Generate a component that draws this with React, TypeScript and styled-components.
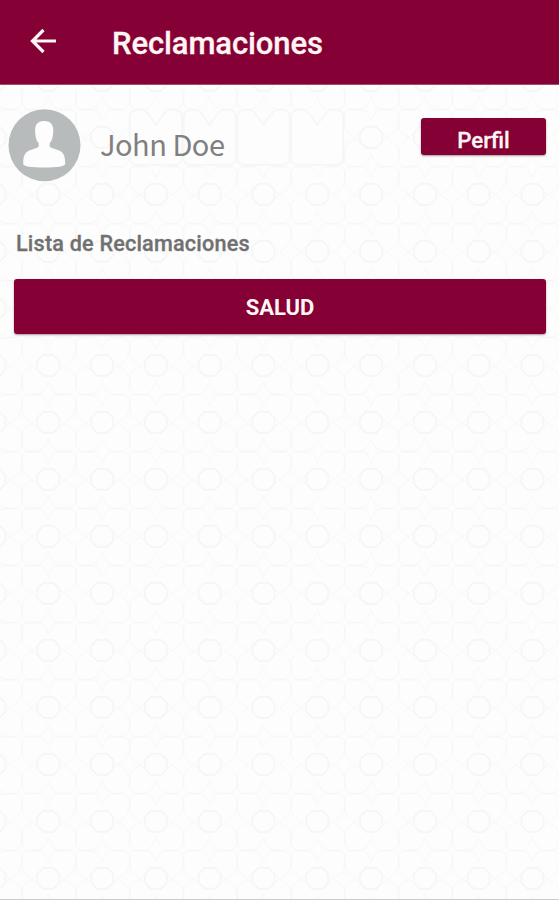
import React from "react";
import styled, { createGlobalStyle } from "styled-components";

const GlobalStyle = createGlobalStyle`
  * { box-sizing: border-box; }
  body { margin: 0; background: #fdfdfd; }
`;

const Screen = styled.div`
  position: relative;
  isolation: isolate;
  display: flex;
  flex-direction: column;
  width: 100%;
  height: 900px;
  overflow: hidden;
  background: #fdfdfd;
  border-bottom: 1px solid #cbcbcb;
  font-family: Roboto, sans-serif;
`;

const Backdrop = styled.svg`
  position: absolute;
  inset: 0;
  z-index: -1;
  width: 100%;
  height: 100%;
`;

const TopBar = styled.header`
  display: flex;
  align-items: center;
  flex: none;
  height: 85px;
  padding-left: 29px;
  background: #850035;
  border-bottom: 1px solid #a64d62;
`;

const BackButton = styled.button`
  display: flex;
  width: 28px;
  height: 28px;
  margin: 0 55px 2px 0;
  padding: 0;
  border: 0;
  background: none;
`;

const Title = styled.h1`
  margin: 3px 0 0;
  color: #fff5f3;
  font-size: 31px;
  line-height: 38px;
  font-weight: 500;
  letter-spacing: -0.1px;
  white-space: nowrap;
  -webkit-text-stroke: 0.3px #fff5f3;
`;

const Content = styled.main`
  display: flex;
  flex-direction: column;
  padding: 24px 13px 0 14px;
`;

const ProfileRow = styled.section`
  display: flex;
  align-items: flex-start;
  height: 73px;
  margin-left: -6px;
`;

const Avatar = styled.svg`
  flex: none;
  width: 73px;
  height: 73px;
`;

const UserName = styled.span`
  flex: 1;
  margin: 14px 0 0 19px;
  color: #808080;
  font-family: "Noto Sans CJK SC", "Noto Sans", sans-serif;
  font-size: 29px;
  line-height: 40px;
  letter-spacing: -0.5px;
  white-space: nowrap;
`;

const ActionButton = styled.button<{ $wide?: boolean }>`
  display: flex;
  align-items: center;
  justify-content: center;
  flex: none;
  width: ${(p) => (p.$wide ? "532px" : "125px")};
  height: ${(p) => (p.$wide ? "55px" : "37px")};
  margin: ${(p) => (p.$wide ? "0" : "9px 0 0")};
  padding: ${(p) => (p.$wide ? "2px 0 0" : "6px 0 0")};
  border: 0;
  border-radius: 3px;
  background: #850035;
  box-shadow: 0 1px 2px rgba(70, 30, 40, 0.45);
  color: #fff5f3;
  font-family: Roboto, sans-serif;
  font-size: ${(p) => (p.$wide ? "22px" : "22.3px")};
  font-weight: ${(p) => (p.$wide ? 700 : 500)};
  line-height: 28px;
  -webkit-text-stroke: ${(p) => (p.$wide ? "0" : "0.3px #fff5f3")};
`;

const SectionTitle = styled.h2`
  margin: 48px 0 22px 2px;
  color: #707070;
  font-size: 21.6px;
  line-height: 27px;
  font-weight: 500;
  letter-spacing: 0.2px;
  -webkit-text-stroke: 0.3px #707070;
  white-space: nowrap;
`;

function Lattice() {
  return (
    <Backdrop aria-hidden="true">
      <defs>
        <pattern id="lattice" x="21.3" y="51.8" width="53.8" height="57" patternUnits="userSpaceOnUse">
          <g fill="none" stroke="#f5f5f5" strokeWidth="1.4">
            <path stroke="#f3f3f3" d="M22 18h10l6 6v9l-6 6h-10l-6-6v-9z" />
            <path d="M5 0.7h13M36 0.7h13M0.7 5v13M0.7 39v13" />
            <path
              stroke="#f9f9f9"
              d="M0.7 17q0 5 5 8l5 4-5 4q-5 3-5 7M53.1 17q0 5-5 8l-5 4 5 4q5 3 5 7M17 0.7q5 0 7 5l3 6 3-6q2-5 7-5M17 56.3q5 0 7-5l3-6 3 6q2 5 7 5M10 29l6-4M10 29l6 4M43 29l-5-4M43 29l-5 4M0 5l5-5M48.8 0l5 5M0 52l5 5M48.8 57l5-5"
            />
          </g>
        </pattern>
        <pattern id="arches" x="21.3" y="51.8" width="53.8" height="57" patternUnits="userSpaceOnUse">
          <path
            fill="none"
            stroke="#f4f4f4"
            strokeWidth="1.4"
            d="M1 50V8q0-7 8-7h5q3 0 13 15Q37 1 40 1h5q8 0 8 7v42q0 6-8 6H9q-8 0-8-6"
          />
        </pattern>
      </defs>
      <rect width="100%" height="100%" fill="url(#lattice)" />
      <rect x="128.9" y="108.8" width="215.2" height="57" fill="#fdfdfd" />
      <rect x="128.9" y="108.8" width="215.2" height="57" fill="url(#arches)" />
    </Backdrop>
  );
}

export default function App() {
  return (
    <>
      <GlobalStyle />
      <Screen>
        <Lattice />
        <TopBar>
          <BackButton aria-label="Volver">
            <svg width="28" height="28" viewBox="0 0 28 28" fill="none" stroke="#fff5f3" strokeWidth="3.2">
              <path d="M27 14H4M14.5 3 3.500 14l11 11" />
            </svg>
          </BackButton>
          <Title>Reclamaciones</Title>
        </TopBar>
        <Content>
          <ProfileRow>
            <Avatar viewBox="0 0 73 73">
              <circle cx="36.5" cy="36.2" r="36" fill="#b8bbbc" />
              <path
                fill="#fdfdfd"
                d="M36.200 12c-7 0-9.500 4-9 11 .2 6 1.500 9 3.500 11v3.500c-1 1.500-4 2-8 3.500C17 43 15.200 46 15.200 55c0 2.500 9 3.500 21 3.500s21-1 21-3.500c0-9-1.800-12-7.500-14-4-1.500-7-2-8-3.500V34c2-2 3.300-5 3.500-11 .5-7-2-11-9-11z"
              />
            </Avatar>
            <UserName>John Doe</UserName>
            <ActionButton>Perfil</ActionButton>
          </ProfileRow>
          <SectionTitle>Lista de Reclamaciones</SectionTitle>
          <ActionButton $wide>SALUD</ActionButton>
        </Content>
      </Screen>
    </>
  );
}
